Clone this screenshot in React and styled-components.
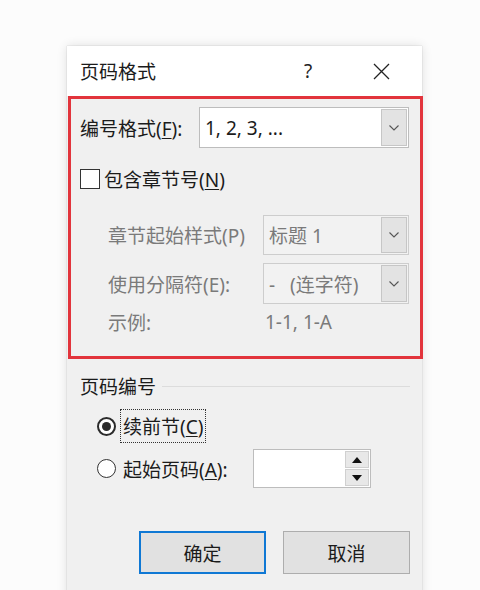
import React from 'react';
import styled, { createGlobalStyle } from 'styled-components';

const GlobalStyle = createGlobalStyle`
  html, body {
    margin: 0;
    padding: 0;
    background: #fcfcfc;
  }
  body {
    font-family: 'Noto Sans', 'Noto Sans CJK SC', sans-serif;
    color: #1b1b1b;
  }
`;

const Page = styled.div`
  width: 480px;
  height: 590px;
  overflow: hidden;
  padding: 46px 0 0 67px;
  box-sizing: border-box;
`;

const Dialog = styled.div`
  width: 355px;
  min-height: 560px;
  background: #f0f0f0;
  box-shadow: 0 0 10px rgba(0, 0, 0, 0.12), 0 0 1px rgba(0, 0, 0, 0.25);
  display: flex;
  flex-direction: column;
`;

const TitleBar = styled.div`
  height: 50px;
  background: #ffffff;
  display: flex;
  align-items: center;
  padding-left: 13px;
  padding-right: 18px;
`;

const Title = styled.div`
  font-size: 19px;
  flex: 1;
`;

const TitleButton = styled.div`
  width: 46px;
  height: 32px;
  display: flex;
  align-items: center;
  justify-content: center;
  font-size: 19px;
  color: #222;
  margin-left: ${(p) => p.$gap || 0}px;
`;

const Highlight = styled.div`
  margin: 0 -1px 0 1px;
  border: 3px solid #e2343c;
  padding: 8px 11px 22px 9px;
  display: flex;
  flex-direction: column;
`;

const Row = styled.div`
  display: flex;
  align-items: center;
  height: ${(p) => p.$h}px;
  margin-top: ${(p) => p.$mt || 0}px;
  padding-left: ${(p) => p.$indent || 0}px;
`;

const Label = styled.div`
  font-size: 19px;
  color: ${(p) => (p.$disabled ? '#7a7a7a' : '#1b1b1b')};
  width: ${(p) => (p.$w ? `${p.$w}px` : 'auto')};
  flex-shrink: 0;
  white-space: nowrap;
`;

const U = styled.span`
  text-decoration: underline;
  text-underline-offset: 2px;
`;

const Select = styled.div`
  flex: 1;
  height: 100%;
  box-sizing: border-box;
  border: 1px solid ${(p) => (p.$disabled ? '#cdcdcd' : '#bdbdbd')};
  background: ${(p) => (p.$disabled ? '#f2f2f2' : '#ffffff')};
  display: flex;
  align-items: stretch;
`;

const SelectValue = styled.div`
  flex: 1;
  display: flex;
  align-items: center;
  padding-left: 5px;
  font-size: 19px;
  color: ${(p) => (p.$disabled ? '#7a7a7a' : '#1b1b1b')};
  white-space: pre;
`;

const DropButton = styled.div`
  width: 26px;
  margin: 1px;
  box-sizing: border-box;
  border: 1px solid #c6c6c6;
  background: #e3e3e3;
  display: flex;
  align-items: center;
  justify-content: center;
`;

const CheckRow = styled.div`
  display: flex;
  align-items: center;
  gap: 4px;
  font-size: 19px;
`;

const CheckBox = styled.div`
  width: 20px;
  height: 20px;
  box-sizing: border-box;
  border: 1px solid #333;
  background: #fff;
`;

const Lower = styled.div`
  padding: 14px 12px 0 13px;
  display: flex;
  flex-direction: column;
`;

const GroupHeader = styled.div`
  display: flex;
  align-items: center;
  gap: 6px;
  font-size: 19px;
  height: 26px;
`;

const GroupLine = styled.div`
  flex: 1;
  height: 1px;
  background: #dcdcdc;
`;

const RadioRow = styled.div`
  display: flex;
  align-items: center;
  padding-left: 17px;
  height: ${(p) => p.$h}px;
  margin-top: ${(p) => p.$mt || 0}px;
`;

const Radio = styled.div`
  width: 19px;
  height: 19px;
  box-sizing: border-box;
  border-radius: 50%;
  border: ${(p) => (p.$checked ? '2px solid #2b2b2b' : '1px solid #333')};
  background: #fff;
  display: flex;
  align-items: center;
  justify-content: center;
  margin-right: 4px;
  &::after {
    content: '';
    display: ${(p) => (p.$checked ? 'block' : 'none')};
    width: 9px;
    height: 9px;
    border-radius: 50%;
    background: #2b2b2b;
  }
`;

const RadioLabel = styled.div`
  font-size: 19px;
  padding: 2px 2px;
  border: 1px dotted ${(p) => (p.$focus ? '#333' : 'transparent')};
`;

const Spin = styled.div`
  margin-left: ${(p) => p.$ml}px;
  width: 118px;
  height: 39px;
  box-sizing: border-box;
  border: 1px solid #bdbdbd;
  background: #fff;
  display: flex;
  justify-content: flex-end;
  padding: 1px;
`;

const SpinButtons = styled.div`
  width: 24px;
  display: flex;
  flex-direction: column;
  gap: 1px;
`;

const SpinButton = styled.div`
  flex: 1;
  background: #e8e8e8;
  border: 1px solid #d0d0d0;
  display: flex;
  align-items: center;
  justify-content: center;
`;

const Buttons = styled.div`
  display: flex;
  gap: 17px;
  padding-left: 59px;
  margin-top: 43px;
`;

const Button = styled.div`
  width: 127px;
  height: 43px;
  box-sizing: border-box;
  background: #e1e1e1;
  border: ${(p) => (p.$primary ? '2px solid #0f78d4' : '1px solid #adadad')};
  display: flex;
  align-items: center;
  justify-content: center;
  font-size: 19px;
`;

const Chevron = () => (
  <svg width="12" height="8" viewBox="0 0 12 8">
    <path d="M1.5 1.5 L6 6 L10.5 1.5" fill="none" stroke="#555" strokeWidth="1.1" />
  </svg>
);

const Triangle = ({ up }) => (
  <svg width="10" height="6" viewBox="0 0 10 6">
    <path d={up ? 'M0 6 L5 0 L10 6 Z' : 'M0 0 L5 6 L10 0 Z'} fill="#111" />
  </svg>
);

const CloseIcon = () => (
  <svg width="17" height="17" viewBox="0 0 17 17">
    <path d="M1 1 L16 16 M16 1 L1 16" stroke="#222" strokeWidth="1.3" />
  </svg>
);

const App = () => {
  return (
    <Page>
      <GlobalStyle />
      <Dialog>
        <TitleBar>
          <Title>页码格式</Title>
          <TitleButton>?</TitleButton>
          <TitleButton $gap={27}>
            <CloseIcon />
          </TitleButton>
        </TitleBar>

        <Highlight>
          <Row $h={41}>
            <Label $w={119}>
              编号格式(<U>F</U>):
            </Label>
            <Select>
              <SelectValue>1, 2, 3, ...</SelectValue>
              <DropButton>
                <Chevron />
              </DropButton>
            </Select>
          </Row>

          <Row $h={22} $mt={20}>
            <CheckRow>
              <CheckBox />
              <span>
                包含章节号(<U>N</U>)
              </span>
            </CheckRow>
          </Row>

          <Row $h={40} $mt={25} $indent={28}>
            <Label $w={155} $disabled>
              章节起始样式(P)
            </Label>
            <Select $disabled>
              <SelectValue $disabled>标题 1</SelectValue>
              <DropButton>
                <Chevron />
              </DropButton>
            </Select>
          </Row>

          <Row $h={41} $mt={8} $indent={28}>
            <Label $w={155} $disabled>
              使用分隔符(E):
            </Label>
            <Select $disabled>
              <SelectValue $disabled>{'-   (连字符)'}</SelectValue>
              <DropButton>
                <Chevron />
              </DropButton>
            </Select>
          </Row>

          <Row $h={24} $mt={6} $indent={28}>
            <Label $w={157} $disabled>
              示例:
            </Label>
            <Label $disabled>1-1, 1-A</Label>
          </Row>
        </Highlight>

        <Lower>
          <GroupHeader>
            <span>页码编号</span>
            <GroupLine />
          </GroupHeader>

          <RadioRow $h={30} $mt={12}>
            <Radio $checked />
            <RadioLabel $focus>
              续前节(<U>C</U>)
            </RadioLabel>
          </RadioRow>

          <RadioRow $h={39} $mt={8}>
            <Radio />
            <RadioLabel>
              起始页码(<U>A</U>):
            </RadioLabel>
            <Spin $ml={22}>
              <SpinButtons>
                <SpinButton>
                  <Triangle up />
                </SpinButton>
                <SpinButton>
                  <Triangle />
                </SpinButton>
              </SpinButtons>
            </Spin>
          </RadioRow>

          <Buttons>
            <Button $primary>确定</Button>
            <Button>取消</Button>
          </Buttons>
        </Lower>
      </Dialog>
    </Page>
  );
};

export default App;
